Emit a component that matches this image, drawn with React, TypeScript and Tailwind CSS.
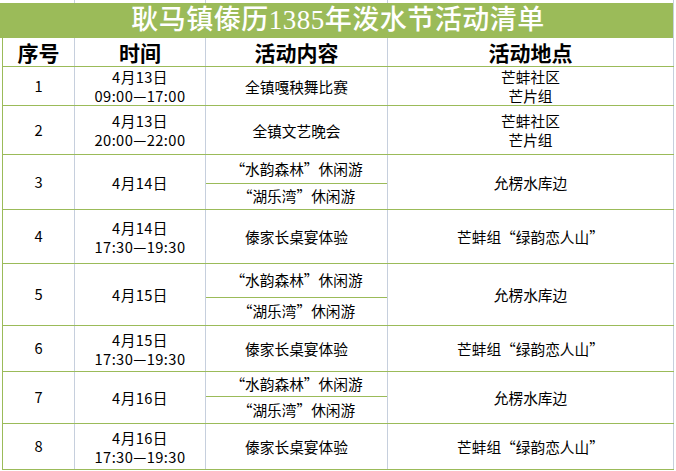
import React from 'react';

type Row = {
  no: string;
  time: string[];
  acts: string[];
  split?: number;
  place: string[];
  h: number;
};

const rows: Row[] = [
  { no: '1', time: ['4月13日', '09:00—17:00'], acts: ['全镇嘎秧舞比赛'], place: ['芒蚌社区', '芒片组'], h: 39 },
  { no: '2', time: ['4月13日', '20:00—22:00'], acts: ['全镇文艺晚会'], place: ['芒蚌社区', '芒片组'], h: 49 },
  { no: '3', time: ['4月14日'], acts: ['“水韵森林”休闲游', '“湖乐湾”休闲游'], split: 28, place: ['允楞水库边'], h: 55 },
  { no: '4', time: ['4月14日', '17:30—19:30'], acts: ['傣家长桌宴体验'], place: ['芒蚌组“绿韵恋人山”'], h: 54 },
  { no: '5', time: ['4月15日'], acts: ['“水韵森林”休闲游', '“湖乐湾”休闲游'], split: 33, place: ['允楞水库边'], h: 62 },
  { no: '6', time: ['4月15日', '17:30—19:30'], acts: ['傣家长桌宴体验'], place: ['芒蚌组“绿韵恋人山”'], h: 46 },
  { no: '7', time: ['4月16日'], acts: ['“水韵森林”休闲游', '“湖乐湾”休闲游'], split: 24, place: ['允楞水库边'], h: 52 },
  { no: '8', time: ['4月16日', '17:30—19:30'], acts: ['傣家长桌宴体验'], place: ['芒蚌组“绿韵恋人山”'], h: 47 },
];

const cols = 'grid grid-cols-[72px_131px_182px_286px]';
const cell = 'border-r border-[#c6cfdd] flex flex-col items-center justify-center text-center';

const Lines: React.FC<{ lines: string[] }> = ({ lines }) => (
  <>
    {lines.map((l) => (
      <div key={l} className="leading-[19px] whitespace-nowrap">{l}</div>
    ))}
  </>
);

export default function App() {
  return (
    <div className="w-[676px] h-[471px] bg-white overflow-hidden text-black font-['Noto_Sans_CJK_SC',sans-serif]">
      {/* strip above the title */}
      <div className={`${cols} ml-[2px] pl-px h-[3px]`}>
        <div className="border-r border-[#c6cfdd]" />
        <div className="border-r border-[#c6cfdd]" />
        <div className="border-r border-[#c6cfdd]" />
        <div className="border-r border-[#c6cfdd]" />
      </div>

      <div className="w-[674px] h-[35px] bg-[#9bbb59] border-r border-[#c6cfdd] flex items-center justify-center pl-[3px] pb-px">
        <span className="text-white text-[27px] leading-none font-medium font-['Liberation_Serif','Noto_Sans_CJK_SC',serif] tracking-[0.5px]">
          耿马镇傣历1385年泼水节活动清单
        </span>
      </div>

      <div className="ml-[2px] w-[672px] border-l border-[#9bbb59]">
        <div className={`${cols} h-[28px] text-[21px] font-bold leading-none`}>
          <div className={cell}>序号</div>
          <div className={cell}>时间</div>
          <div className={cell}>活动内容</div>
          <div className={cell}>活动地点</div>
        </div>

        {rows.map((r, i) => (
          <div
            key={r.no}
            className={`${cols} border-t border-[#9bbb59] text-[14.7px] ${i === rows.length - 1 ? 'border-b' : ''}`}
            style={{ height: r.h }}
          >
            <div className={cell}>{r.no}</div>
            <div className={`${cell} tracking-[0.4px]`}>
              <Lines lines={r.time} />
            </div>
            {r.acts.length > 1 ? (
              <div className="border-r border-[#c6cfdd] flex flex-col">
                <div className="flex items-center justify-center whitespace-nowrap" style={{ height: r.split }}>
                  {r.acts[0]}
                </div>
                <div className="flex-1 border-t border-[#9bbb59] flex items-center justify-center whitespace-nowrap">
                  {r.acts[1]}
                </div>
              </div>
            ) : (
              <div className={cell}>
                <Lines lines={r.acts} />
              </div>
            )}
            <div className={cell}>
              <Lines lines={r.place} />
            </div>
          </div>
        ))}
      </div>
    </div>
  );
}
